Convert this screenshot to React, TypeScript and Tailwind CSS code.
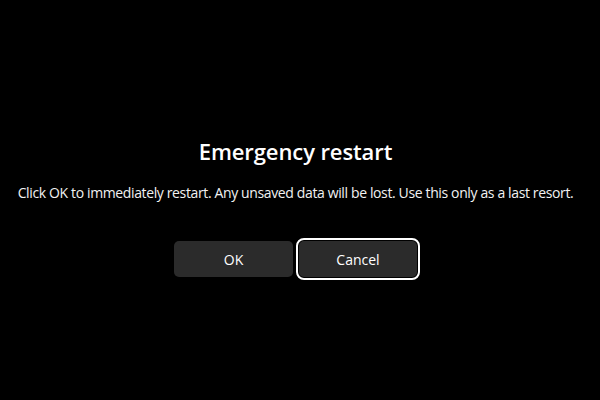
import React from 'react';

const App = () => {
  return (
    <div className="w-[600px] h-[400px] bg-black text-white font-['Open_Sans',sans-serif] flex flex-col items-center pt-[137px] pr-[9px]">
      <h1 className="text-[22px] leading-[28px] font-semibold tracking-[-0.1px]">Emergency restart</h1>
      <p className="mt-[18px] text-[14px] leading-[20px] text-[#f2f2f2] whitespace-nowrap tracking-[-0.37px]">
        Click OK to immediately restart. Any unsaved data will be lost. Use this only as a last resort.
      </p>
      <div className="mt-[38px] flex gap-[6px]">
        <button className="w-[119px] h-[36px] rounded-[5px] bg-[#2b2b2b] text-[14px] text-white">OK</button>
        <button className="w-[118px] h-[36px] rounded-[5px] bg-[#2b2b2b] text-[14px] text-white outline-2 outline-white outline-offset-[1px]">Cancel</button>
      </div>
    </div>
  );
};

export default App;
